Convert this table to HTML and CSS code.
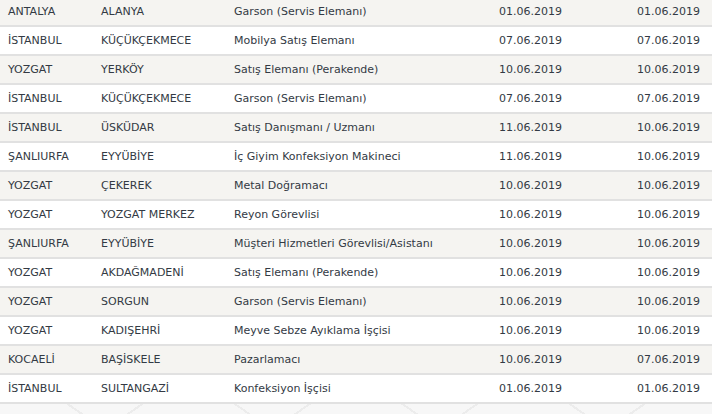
FILE: index.html
```html
<!DOCTYPE html>
<html lang="tr">
<head>
<meta charset="utf-8">
<title>İş İlanları</title>
<link rel="stylesheet" href="styles.css">
</head>
<body>
<div class="page">
<table class="jobs">
  <colgroup>
    <col class="c-il"><col class="c-ilce"><col class="c-meslek"><col class="c-tarih"><col class="c-son">
  </colgroup>
  <tbody>
    <tr><td>ANTALYA</td><td>ALANYA</td><td>Garson (Servis Elemanı)</td><td>01.06.2019</td><td>01.06.2019</td></tr>
    <tr><td>İSTANBUL</td><td>KÜÇÜKÇEKMECE</td><td>Mobilya Satış Elemanı</td><td>07.06.2019</td><td>07.06.2019</td></tr>
    <tr><td>YOZGAT</td><td>YERKÖY</td><td>Satış Elemanı (Perakende)</td><td>10.06.2019</td><td>10.06.2019</td></tr>
    <tr><td>İSTANBUL</td><td>KÜÇÜKÇEKMECE</td><td>Garson (Servis Elemanı)</td><td>07.06.2019</td><td>07.06.2019</td></tr>
    <tr><td>İSTANBUL</td><td>ÜSKÜDAR</td><td>Satış Danışmanı / Uzmanı</td><td>11.06.2019</td><td>10.06.2019</td></tr>
    <tr><td>ŞANLIURFA</td><td>EYYÜBİYE</td><td>İç Giyim Konfeksiyon Makineci</td><td>11.06.2019</td><td>10.06.2019</td></tr>
    <tr><td>YOZGAT</td><td>ÇEKEREK</td><td>Metal Doğramacı</td><td>10.06.2019</td><td>10.06.2019</td></tr>
    <tr><td>YOZGAT</td><td>YOZGAT MERKEZ</td><td>Reyon Görevlisi</td><td>10.06.2019</td><td>10.06.2019</td></tr>
    <tr><td>ŞANLIURFA</td><td>EYYÜBİYE</td><td>Müşteri Hizmetleri Görevlisi/Asistanı</td><td>10.06.2019</td><td>10.06.2019</td></tr>
    <tr><td>YOZGAT</td><td>AKDAĞMADENİ</td><td>Satış Elemanı (Perakende)</td><td>10.06.2019</td><td>10.06.2019</td></tr>
    <tr><td>YOZGAT</td><td>SORGUN</td><td>Garson (Servis Elemanı)</td><td>10.06.2019</td><td>10.06.2019</td></tr>
    <tr><td>YOZGAT</td><td>KADIŞEHRİ</td><td>Meyve Sebze Ayıklama İşçisi</td><td>10.06.2019</td><td>10.06.2019</td></tr>
    <tr><td>KOCAELİ</td><td>BAŞİSKELE</td><td>Pazarlamacı</td><td>10.06.2019</td><td>07.06.2019</td></tr>
    <tr><td>İSTANBUL</td><td>SULTANGAZİ</td><td>Konfeksiyon İşçisi</td><td>01.06.2019</td><td>01.06.2019</td></tr>
  </tbody>
</table>
</div>
</body>
</html>
```
FILE: styles.css
```css
html, body {
  margin: 0;
  padding: 0;
}
body {
  width: 712px;
  height: 414px;
  overflow: hidden;
  background-color: #f7f7f7;
  background-image:
    repeating-linear-gradient(35deg, transparent 0 46px, #ececec 46px 48px, transparent 48px 96px),
    repeating-linear-gradient(-35deg, transparent 0 46px, #ececec 46px 48px, transparent 48px 96px);
  font-family: "DejaVu Sans", Verdana, sans-serif;
}
.page {
  margin-top: -2px;
}
.jobs {
  width: 712px;
  border-collapse: collapse;
  table-layout: fixed;
  font-size: 11px;
  color: #333a44;
}
.c-il { width: 93px; }
.c-ilce { width: 133px; }
.c-meslek { width: 265px; }
.c-tarih { width: 138px; }
.c-son { width: 83px; }
.jobs tr {
  background: #ffffff;
  border-bottom: 2px solid #e1e1e1;
}
.jobs tr:nth-child(odd) {
  background: #f5f4f1;
}
.jobs td {
  height: 27px;
  padding: 0 0 0 8px;
  white-space: nowrap;
  vertical-align: middle;
  line-height: 13px;
}
```
